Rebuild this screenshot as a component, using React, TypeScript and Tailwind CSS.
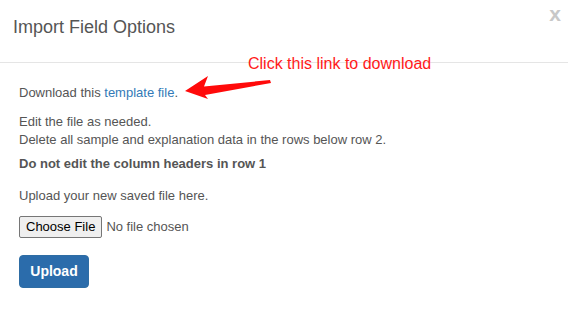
import React from "react";

export default function App() {
  return (
    <div className="relative w-[568px] h-[313px] bg-white text-[#555] font-['Liberation_Sans',Arial,sans-serif] overflow-hidden">
      {/* header */}
      <div className="flex items-start justify-between h-[63px] border-b border-[#e5e5e5] pl-[13px] pr-[7px]">
        <h4 className="text-[18px] leading-[26px] mt-[14px] text-[#555]">Import Field Options</h4>
        <button className="text-[21px] font-bold leading-none mt-[3px] text-[#c8c8c8]">x</button>
      </div>

      {/* annotation */}
      <div className="absolute left-[248px] top-[54px] text-[16px] leading-[20px] text-[#ff1a1a]">
        Click this link to download
      </div>
      <svg className="absolute left-0 top-0" width="568" height="313" viewBox="0 0 568 313">
        <path d="M185,91 L208,76 L204,86.5 L270,80 L271,83 L205,95 L208,99 Z" fill="#ff0a0a" />
      </svg>

      {/* body */}
      <div className="px-[19px] pt-[21px] text-[13px] leading-[18.5px]">
        <p className="mb-[10px]">
          Download this <a href="#" className="text-[#337ab7]">template file</a>.
        </p>
        <p className="mb-[5px]">
          Edit the file as needed.
          <br />
          Delete all sample and explanation data in the rows below row 2.
        </p>
        <p className="font-bold mb-[14px]">Do not edit the column headers in row 1</p>
        <p className="mb-[10px]">Upload your new saved file here.</p>
        <input type="file" className="text-[13px] font-['Liberation_Sans',Arial,sans-serif] text-[#555] file:mr-[4px] file:px-[6px] file:py-[1px] file:bg-[#efefef] file:border file:border-[#767676] file:rounded-[2px] file:text-black" />
        <div className="mt-[17px]">
          <button className="w-[70px] h-[33px] rounded-[4px] bg-[#2b6cab] border border-[#2e6da4] text-white font-bold text-[14px]">
            Upload
          </button>
        </div>
      </div>
    </div>
  );
}
